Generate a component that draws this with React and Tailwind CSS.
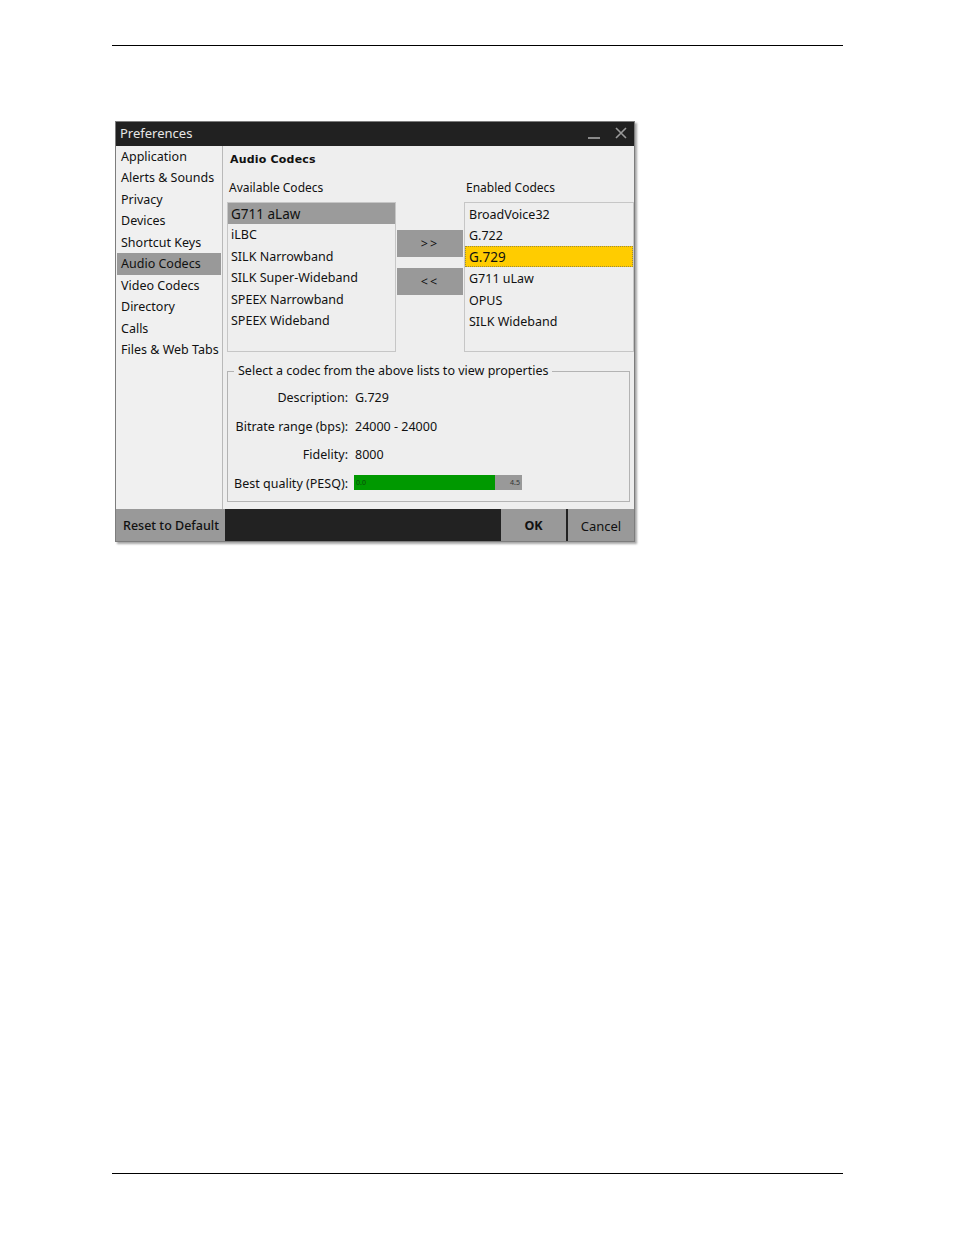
import React from 'react';

const navItems = [
    'Application',
    'Alerts & Sounds',
    'Privacy',
    'Devices',
    'Shortcut Keys',
    'Audio Codecs',
    'Video Codecs',
    'Directory',
    'Calls',
    'Files & Web Tabs',
];

const available = ['G711 aLaw', 'iLBC', 'SILK Narrowband', 'SILK Super-Wideband', 'SPEEX Narrowband', 'SPEEX Wideband'];
const enabled = ['BroadVoice32', 'G.722', 'G.729', 'G711 uLaw', 'OPUS', 'SILK Wideband'];

const props = [
    ['Description:', 'G.729'],
    ['Bitrate range (bps):', '24000 - 24000'],
    ['Fidelity:', '8000'],
];

export default function App() {
    const font = { fontFamily: '"Noto Sans", "Open Sans", sans-serif' };

    return (
        <div className="bg-white w-[954px] h-[1235px] overflow-hidden" style={font}>
            <div className="ml-[112px] w-[731px] pt-[45px]">
                <div className="border-t border-black" />

                {/* Preferences dialog */}
                <div className="mt-[75px] ml-[3px] w-[520px] border border-[#7d7d7d] shadow-[2px_2px_2px_rgba(0,0,0,0.35)] text-[12.5px] text-[#111]">
                    {/* Title bar */}
                    <div className="h-[24px] bg-[#212121] flex items-center pl-[4px] pr-[7px] text-[#e6e6e6] text-[13px]">
                        <span className="flex-1">Preferences</span>
                        <span className="w-[12px] h-[2px] bg-[#8a8a8a] mt-[8px] mr-[15px]" />
                        <svg width="12" height="12" viewBox="0 0 12 12" className="mb-[2px]">
                            <path d="M1 1 L11 11 M11 1 L1 11" stroke="#9a9a9a" strokeWidth="1.6" />
                        </svg>
                    </div>

                    {/* Body */}
                    <div className="flex h-[363px] bg-[#eeeeee]">
                        {/* Sidebar */}
                        <div className="w-[109px] border-r border-[#b9b9b9] bg-[#f0f0f0] px-[1px]">
                            {navItems.map((item) => (
                                <div
                                    key={item}
                                    className={`h-[21.45px] leading-[21.45px] pl-[4px] whitespace-nowrap ${item === 'Audio Codecs' ? 'bg-[#999999]' : ''}`}
                                >
                                    {item}
                                </div>
                            ))}
                        </div>

                        {/* Audio codecs page */}
                        <div className="flex-1 pl-[4px]">
                            <div className="h-[28px] pt-[6px] pl-[3px] font-bold text-[11px] tracking-[0.2px]" style={{ fontFamily: '"DejaVu Sans", sans-serif' }}>
                                Audio Codecs
                            </div>
                            <div className="flex h-[28px] items-center pl-[2px] text-[12px]">
                                <span className="w-[237px]">Available Codecs</span>
                                <span>Enabled Codecs</span>
                            </div>

                            <div className="flex gap-[1px] h-[150px]">
                                <div className="w-[169px] border border-[#c6c6c6] bg-[#eeeeee]">
                                    {available.map((c, i) => (
                                        <div
                                            key={c}
                                            className={`h-[21.45px] pt-[1px] leading-[20.45px] pl-[3px] ${i === 0 ? 'bg-[#9b9b9b] text-[13.5px]' : ''}`}
                                        >
                                            {c}
                                        </div>
                                    ))}
                                </div>

                                <div className="w-[66px] pt-[28px] flex flex-col gap-[11px]">
                                    <div className="h-[27px] bg-[#999999] flex items-center justify-center text-[12.5px] tracking-[2px] pt-[2px]">&gt;&gt;</div>
                                    <div className="h-[27px] bg-[#999999] flex items-center justify-center text-[12.5px] tracking-[2px] pt-[2px]">&lt;&lt;</div>
                                </div>

                                <div className="w-[170px] border border-[#c6c6c6] bg-[#eeeeee]">
                                    {enabled.map((c) => (
                                        <div
                                            key={c}
                                            className={`h-[21.45px] pt-[1px] leading-[19px] pl-[3px] ${c === 'G.729' ? 'bg-[#ffcc00] border border-dotted border-[#9c8a3a] text-[13.5px]' : 'border border-transparent'}`}
                                        >
                                            {c}
                                        </div>
                                    ))}
                                </div>
                            </div>

                            {/* Properties group */}
                            <fieldset className="mt-[10px] w-[403px] h-[140px] border border-[#b3b3b3] px-0">
                                <legend className="ml-[6px] px-[4px] leading-[18px]">Select a codec from the above lists to view properties</legend>
                                <div className="grid grid-cols-[120px_1fr] gap-x-[7px] pt-[9px]">
                                    {props.map(([k, v]) => (
                                        <React.Fragment key={k}>
                                            <div className="text-right h-[28.7px]">{k}</div>
                                            <div className="h-[28.7px]">{v}</div>
                                        </React.Fragment>
                                    ))}
                                    <div className="text-right">Best quality (PESQ):</div>
                                    <div className="flex h-[15px] w-[168px] -ml-[1px] text-[7px] leading-[15px]">
                                        <div className="w-[141px] bg-[#009900] pl-[2px] text-[#0a4a0a]">0.0</div>
                                        <div className="flex-1 bg-[#999999] text-right pr-[2px] text-[#333]">4.5</div>
                                    </div>
                                </div>
                            </fieldset>
                        </div>
                    </div>

                    {/* Footer */}
                    <div className="h-[32px] bg-[#222222] flex text-[12.5px]">
                        <div className="w-[109px] bg-[#999999] flex items-center pl-[7px] pt-[3px] font-medium">Reset to Default</div>
                        <div className="flex-1" />
                        <div className="w-[65px] bg-[#999999] flex items-center justify-center pt-[3px] font-bold">OK</div>
                        <div className="w-[2px]" />
                        <div className="w-[66px] bg-[#999999] flex items-center justify-center pt-[3px] text-[13px]">Cancel</div>
                    </div>
                </div>

                <div className="mt-[631px] border-t border-black" />
            </div>
        </div>
    );
}
